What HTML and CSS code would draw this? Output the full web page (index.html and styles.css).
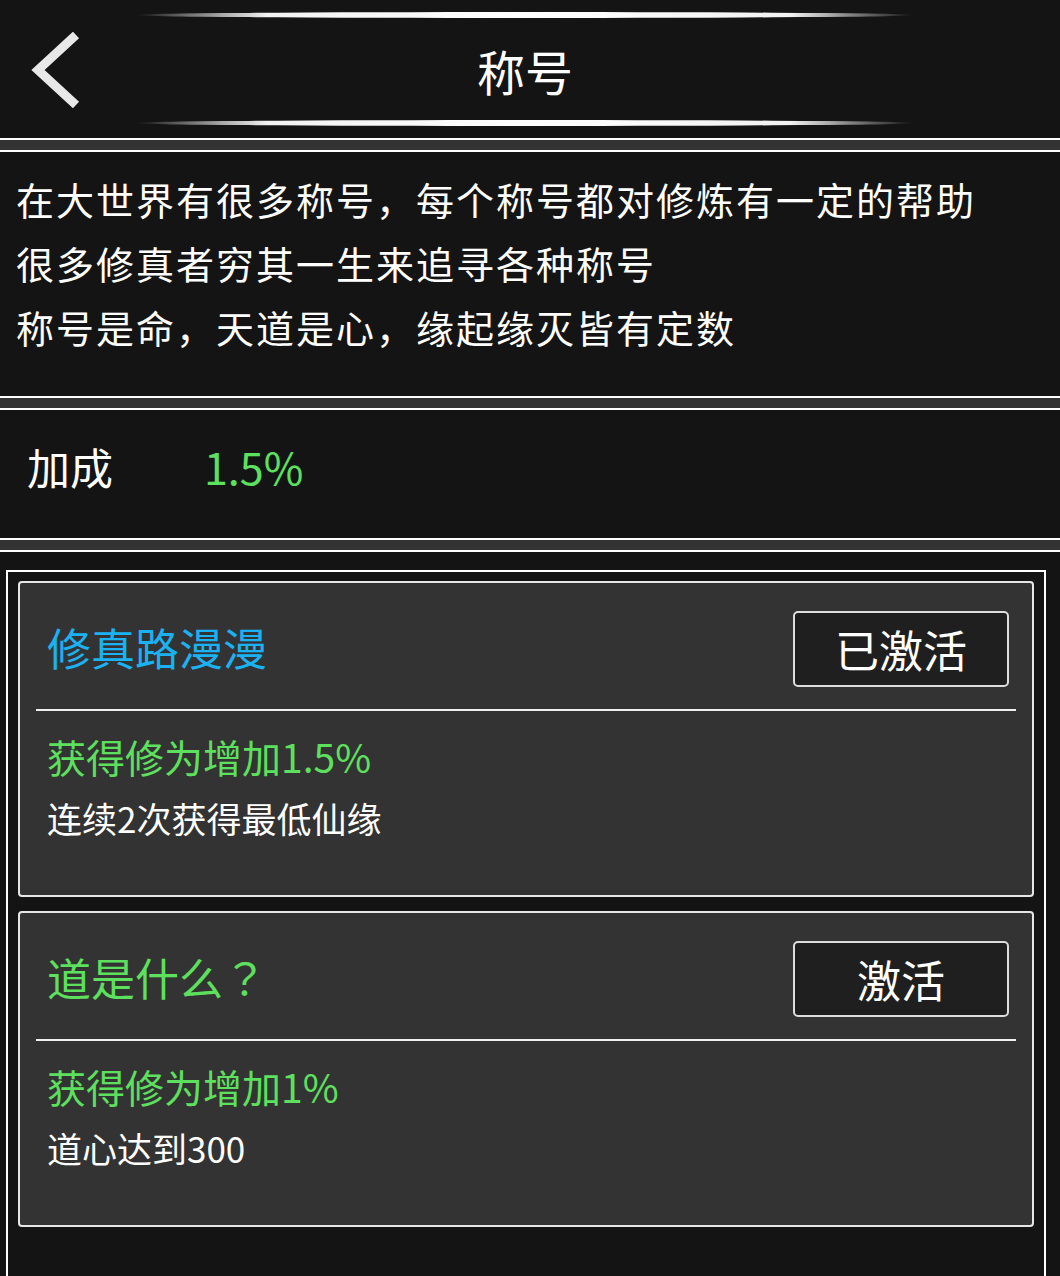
FILE: index.html
```html
<!DOCTYPE html>
<html lang="zh-CN">
<head>
<meta charset="utf-8">
<title>称号</title>
<link rel="stylesheet" href="styles.css">
</head>
<body>
<div class="page">
  <header class="header">
    <div class="deco deco-top"></div>
    <div class="header-row">
      <div class="back">
        <svg width="60" height="80" viewBox="0 0 60 80" aria-hidden="true">
          <polyline points="47,3 9,38 47,73" fill="none" stroke="#e8e8e8" stroke-width="9" stroke-linejoin="miter" stroke-miterlimit="10"/>
        </svg>
      </div>
      <h1 class="title">称号</h1>
      <div class="spacer"></div>
    </div>
    <div class="deco deco-bottom"></div>
  </header>
  <div class="sep"></div>
  <section class="desc">
    <p>在大世界有很多称号，每个称号都对修炼有一定的帮助</p>
    <p>很多修真者穷其一生来追寻各种称号</p>
    <p>称号是命，天道是心，缘起缘灭皆有定数</p>
  </section>
  <div class="sep"></div>
  <section class="bonus">
    <span class="bonus-label">加成</span>
    <span class="bonus-value">1.5%</span>
  </section>
  <div class="sep"></div>
  <section class="list">
    <div class="card">
      <div class="card-head">
        <span class="card-title blue">修真路漫漫</span>
        <button class="btn">已激活</button>
      </div>
      <div class="divider"></div>
      <div class="card-body">
        <p class="effect">获得修为增加1.5%</p>
        <p class="cond">连续2次获得最低仙缘</p>
      </div>
    </div>
    <div class="card">
      <div class="card-head">
        <span class="card-title green">道是什么<span class="qm" lang="zh-TW">？</span></span>
        <button class="btn">激活</button>
      </div>
      <div class="divider"></div>
      <div class="card-body">
        <p class="effect">获得修为增加1%</p>
        <p class="cond">道心达到300</p>
      </div>
    </div>
  </section>
</div>
</body>
</html>
```
FILE: styles.css
```css
* { box-sizing: border-box; }
html, body {
  margin: 0;
  padding: 0;
  background: #141414;
}
body {
  font-family: "Noto Sans CJK SC", "Noto Sans", sans-serif;
  color: #ffffff;
  width: 1060px;
  height: 1276px;
  overflow: hidden;
}
p { margin: 0; }

.header {
  height: 138px;
  background: #141414;
  display: flex;
  flex-direction: column;
}
.deco {
  height: 6px;
  margin: 0 145px 0 135px;
  border-radius: 50%;
  background: linear-gradient(to right, rgba(255,255,255,0) 0%, rgba(200,200,200,0.6) 8%, #f2f2f2 17%, #ffffff 50%, #f2f2f2 84%, rgba(200,200,200,0.6) 92%, rgba(255,255,255,0) 100%);
}
.deco-top { margin-top: 12px; }
.header-row {
  height: 102px;
  display: grid;
  grid-template-columns: 1fr auto 1fr;
  align-items: center;
}
.back {
  padding-left: 29px;
  padding-top: 5px;
  display: flex;
  align-items: center;
  height: 86px;
}
.back svg { display: block; }
.title {
  margin: 0;
  font-size: 48px;
  font-weight: 400;
  line-height: 60px;
  padding-right: 10px;
  padding-top: 2px;
}

.sep {
  height: 14px;
  background: #333333;
  border-top: 2px solid #ffffff;
  border-bottom: 2px solid #ffffff;
}

.desc {
  height: 244px;
  padding: 15px 16px 0 16px;
}
.desc p {
  font-size: 38px;
  line-height: 64px;
  letter-spacing: 2px;
  white-space: nowrap;
}

.bonus {
  height: 128px;
  display: flex;
  align-items: center;
  padding: 0 0 16px 27px;
  font-size: 43px;
}
.bonus-label { width: 177px; }
.bonus-value { color: #5de05d; }

.list {
  margin: 18px 14px 0 6px;
  border: 2px solid #ffffff;
  border-bottom: none;
  padding: 9px 10px 0 10px;
  height: 800px;
  display: flex;
  flex-direction: column;
  gap: 14px;
}
.card {
  background: #333333;
  border: 2px solid #e6e6e6;
  border-radius: 4px;
  padding-bottom: 52px;
}
.card-head {
  display: flex;
  justify-content: space-between;
  align-items: center;
  padding: 28px 23px 0 27px;
}
.card-title {
  font-size: 44px;
  line-height: 60px;
  padding-bottom: 4px;
}
.qm {
  font-family: "Noto Sans CJK TC", "Noto Sans CJK SC", sans-serif;
}
.blue { color: #1ab2f2; }
.green { color: #5de05d; }
.btn {
  width: 216px;
  height: 76px;
  background: #1f1f1f;
  border: 2px solid #dddddd;
  border-radius: 5px;
  color: #ffffff;
  font-family: "Noto Sans CJK SC", "Noto Sans", sans-serif;
  font-size: 44px;
  line-height: 60px;
  padding: 0;
  letter-spacing: 0;
}
.divider {
  height: 2px;
  background: #f0f0f0;
  margin: 22px 16px 0 16px;
}
.card-body {
  padding: 20px 0 0 27px;
}
.effect {
  color: #5de05d;
  font-size: 39px;
  line-height: 50px;
}
.cond {
  margin-top: 12px;
  font-size: 35px;
  line-height: 50px;
}
```
